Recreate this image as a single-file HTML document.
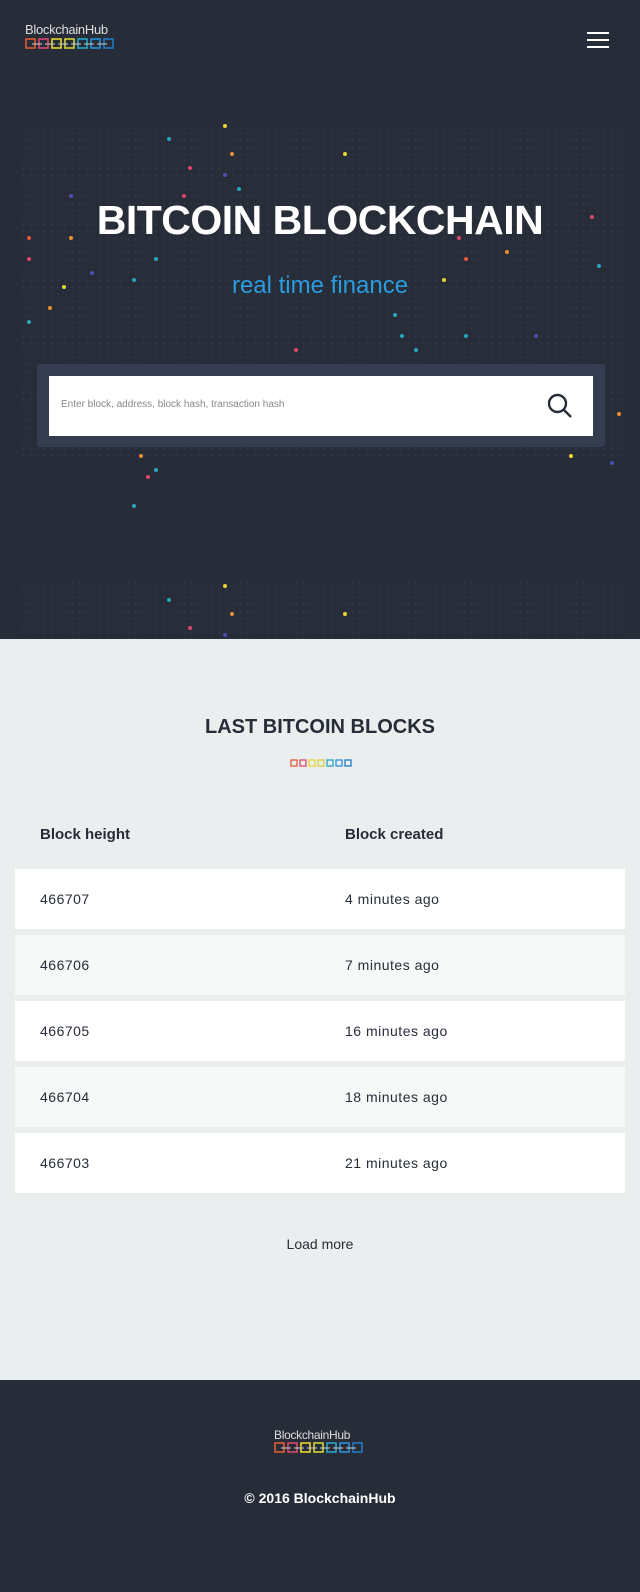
<!DOCTYPE html>
<html><head><meta charset="utf-8"><style>
*{margin:0;padding:0;box-sizing:border-box}
body{width:640px;height:1592px;font-family:"Liberation Sans",sans-serif;background:#ebeeef;position:relative;overflow:hidden}
.hero{position:absolute;left:0;top:0;width:640px;height:639px;background:#272d38;overflow:hidden}
.dots{position:absolute;left:20px;top:130px;width:600px;height:330px;background-image:radial-gradient(circle,#2f3542 1px,transparent 1.3px);background-size:7px 7px}
.dots2{position:absolute;left:20px;top:580px;width:600px;height:60px;background-image:radial-gradient(circle,#2f3542 1px,transparent 1.3px);background-size:7px 7px}
.d{position:absolute;width:4px;height:4px;border-radius:50%}
h1{position:absolute;top:197px;width:640px;text-align:center;color:#fff;font-size:41px;font-weight:bold;letter-spacing:-0.5px}
.sub{position:absolute;top:272px;width:640px;text-align:center;color:#2b9ce0;font-size:24px}
.sbox{position:absolute;left:37px;top:364px;width:568px;height:83px;background:#343d50;border-radius:3px}
.sin{position:absolute;left:12px;top:12px;width:544px;height:60px;background:#fff;font-size:10px;color:#888;padding:23px 12px}
.burger{position:absolute;left:587px;top:32px;width:22px}
.burger i{display:block;height:2px;background:#fff;margin-bottom:5px}
h2{position:absolute;top:716px;width:640px;text-align:center;color:#272d38;font-size:20px;font-weight:bold}
.th{position:absolute;top:826px;font-size:15px;font-weight:bold;color:#272d38}
.row{position:absolute;left:15px;width:610px;height:60px;background:#fff;font-size:14px;color:#272d38;letter-spacing:.5px}
.row.a{background:#f7f8f8}
.row span{position:absolute;top:22px}
.lm{position:absolute;top:1236px;width:640px;text-align:center;font-size:14px;color:#272d38}
.foot{position:absolute;top:1380px;left:0;width:640px;height:212px;background:#272d38}
.copy{position:absolute;top:110px;width:640px;text-align:center;color:#fff;font-size:14px;font-weight:bold}
.logo{position:absolute;color:#ddd;font-size:13px;letter-spacing:-.3px}
</style></head><body>
<div class="hero">
<div class="dots"></div><div class="dots2"></div>
<div class="logo" style="left:25px;top:22px">BlockchainHub
<svg width="92" height="12" style="display:block;margin-top:1px"><g fill="none" stroke-width="1.6"><rect x="1" y="1" width="9" height="9" stroke="#e05a33"/><rect x="14" y="1" width="9" height="9" stroke="#d9476d"/><rect x="27" y="1" width="9" height="9" stroke="#e8d52f"/><rect x="40" y="1" width="9" height="9" stroke="#d4d03a"/><rect x="53" y="1" width="9" height="9" stroke="#26a5c0"/><rect x="66" y="1" width="9" height="9" stroke="#2a8fd6"/><rect x="79" y="1" width="9" height="9" stroke="#2278c0"/><path d="M7 6h10M20 6h10M33 6h10M46 6h10M59 6h10M72 6h10" stroke="#ccc" stroke-width="1"/></g></svg></div>
<div class="burger"><i></i><i></i><i></i></div>
<div class="d" style="left:223px;top:124px;background:#e8d52f"></div>
<div class="d" style="left:167px;top:137px;background:#26a5c0"></div>
<div class="d" style="left:230px;top:152px;background:#e8902f"></div>
<div class="d" style="left:343px;top:152px;background:#e8d52f"></div>
<div class="d" style="left:188px;top:166px;background:#d9476d"></div>
<div class="d" style="left:223px;top:173px;background:#4a4fb0"></div>
<div class="d" style="left:237px;top:187px;background:#26a5c0"></div>
<div class="d" style="left:69px;top:194px;background:#4a4fb0"></div>
<div class="d" style="left:182px;top:194px;background:#d9476d"></div>
<div class="d" style="left:590px;top:215px;background:#d9476d"></div>
<div class="d" style="left:27px;top:236px;background:#e05a33"></div>
<div class="d" style="left:69px;top:236px;background:#e8902f"></div>
<div class="d" style="left:457px;top:236px;background:#d9476d"></div>
<div class="d" style="left:505px;top:250px;background:#e8902f"></div>
<div class="d" style="left:27px;top:257px;background:#d9476d"></div>
<div class="d" style="left:154px;top:257px;background:#26a5c0"></div>
<div class="d" style="left:464px;top:257px;background:#e05a33"></div>
<div class="d" style="left:597px;top:264px;background:#26a5c0"></div>
<div class="d" style="left:90px;top:271px;background:#4a4fb0"></div>
<div class="d" style="left:132px;top:278px;background:#26a5c0"></div>
<div class="d" style="left:442px;top:278px;background:#e8d52f"></div>
<div class="d" style="left:62px;top:285px;background:#e8d52f"></div>
<div class="d" style="left:48px;top:306px;background:#e8902f"></div>
<div class="d" style="left:393px;top:313px;background:#26a5c0"></div>
<div class="d" style="left:27px;top:320px;background:#26a5c0"></div>
<div class="d" style="left:400px;top:334px;background:#26a5c0"></div>
<div class="d" style="left:464px;top:334px;background:#26a5c0"></div>
<div class="d" style="left:534px;top:334px;background:#4a4fb0"></div>
<div class="d" style="left:294px;top:348px;background:#d9476d"></div>
<div class="d" style="left:414px;top:348px;background:#26a5c0"></div>
<div class="d" style="left:617px;top:412px;background:#e8902f"></div>
<div class="d" style="left:139px;top:454px;background:#e8902f"></div>
<div class="d" style="left:569px;top:454px;background:#e8d52f"></div>
<div class="d" style="left:154px;top:468px;background:#26a5c0"></div>
<div class="d" style="left:610px;top:461px;background:#4a4fb0"></div>
<div class="d" style="left:146px;top:475px;background:#d9476d"></div>
<div class="d" style="left:132px;top:504px;background:#26a5c0"></div>
<div class="d" style="left:223px;top:584px;background:#e8d52f"></div>
<div class="d" style="left:167px;top:598px;background:#26a5c0"></div>
<div class="d" style="left:230px;top:612px;background:#e8902f"></div>
<div class="d" style="left:343px;top:612px;background:#e8d52f"></div>
<div class="d" style="left:188px;top:626px;background:#d9476d"></div>
<div class="d" style="left:223px;top:633px;background:#4a4fb0"></div>
<h1>BITCOIN BLOCKCHAIN</h1>
<div class="sub">real time finance</div>
<div class="sbox"><div class="sin">Enter block, address, block hash, transaction hash
<svg width="26" height="26" style="position:absolute;right:20px;top:17px" fill="none" stroke="#272d38" stroke-width="2.4"><circle cx="10.5" cy="10.5" r="8.5"/><path d="M17 17l7 7"/></svg></div></div>
</div>
<h2>LAST BITCOIN BLOCKS</h2>
<svg width="62" height="9" style="position:absolute;left:290px;top:759px"><g fill="none" stroke-width="1.3"><rect x="1" y="1" width="6" height="6" stroke="#e05a33"/><rect x="10" y="1" width="6" height="6" stroke="#d9476d"/><rect x="19" y="1" width="6" height="6" stroke="#e8d52f"/><rect x="28" y="1" width="6" height="6" stroke="#d4d03a"/><rect x="37" y="1" width="6" height="6" stroke="#26a5c0"/><rect x="46" y="1" width="6" height="6" stroke="#2a8fd6"/><rect x="55" y="1" width="6" height="6" stroke="#2278c0"/></g></svg>
<div class="th" style="left:40px">Block height</div>
<div class="th" style="left:345px">Block created</div>
<div class="row" style="top:869px"><span style="left:25px">466707</span><span style="left:330px">4 minutes ago</span></div>
<div class="row a" style="top:935px"><span style="left:25px">466706</span><span style="left:330px">7 minutes ago</span></div>
<div class="row" style="top:1001px"><span style="left:25px">466705</span><span style="left:330px">16 minutes ago</span></div>
<div class="row a" style="top:1067px"><span style="left:25px">466704</span><span style="left:330px">18 minutes ago</span></div>
<div class="row" style="top:1133px"><span style="left:25px">466703</span><span style="left:330px">21 minutes ago</span></div>
<div class="lm">Load more</div>
<div class="foot">
<div class="logo" style="left:274px;top:48px;font-size:12px">BlockchainHub
<svg width="92" height="12" style="display:block"><g fill="none" stroke-width="1.6"><rect x="1" y="1" width="9" height="9" stroke="#e05a33"/><rect x="14" y="1" width="9" height="9" stroke="#d9476d"/><rect x="27" y="1" width="9" height="9" stroke="#e8d52f"/><rect x="40" y="1" width="9" height="9" stroke="#d4d03a"/><rect x="53" y="1" width="9" height="9" stroke="#26a5c0"/><rect x="66" y="1" width="9" height="9" stroke="#2a8fd6"/><rect x="79" y="1" width="9" height="9" stroke="#2278c0"/><path d="M7 6h10M20 6h10M33 6h10M46 6h10M59 6h10M72 6h10" stroke="#ccc" stroke-width="1"/></g></svg></div>
<div class="copy">© 2016 BlockchainHub</div>
</div>
</body></html>
